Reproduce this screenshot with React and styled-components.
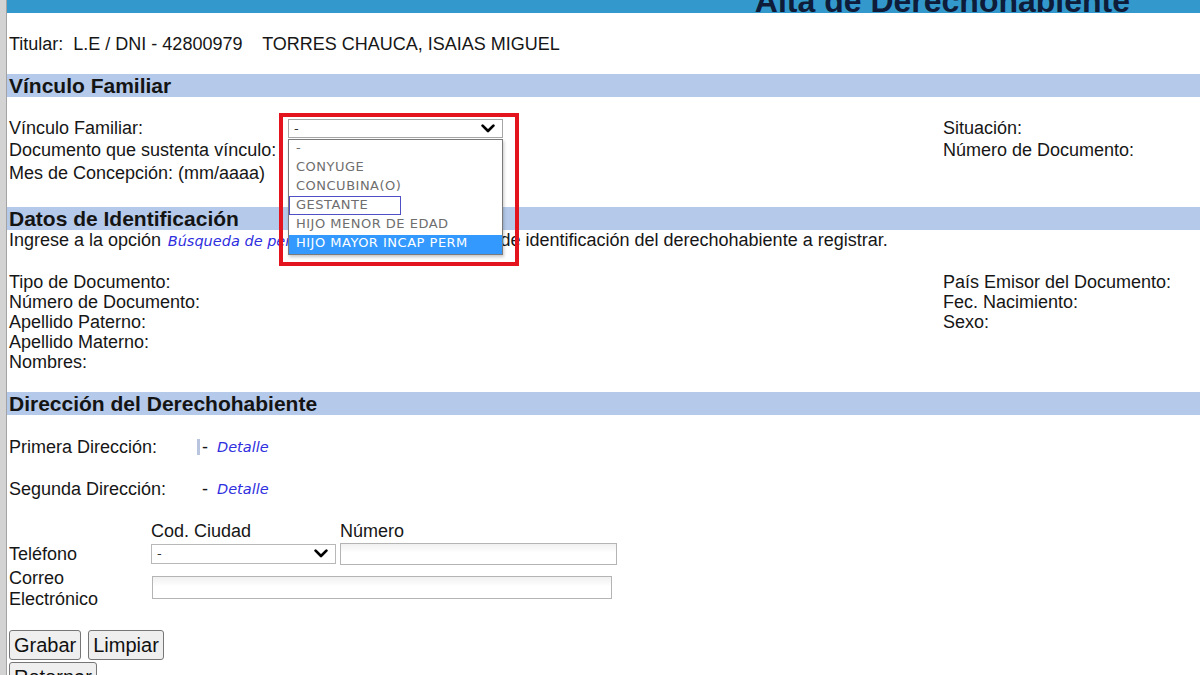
import React from "react";
import styled, { createGlobalStyle } from "styled-components";

const GlobalStyle = createGlobalStyle`
  html, body { margin: 0; padding: 0; background: #fff; }
  body {
    font-family: "Liberation Sans", Arial, sans-serif;
    font-size: 18px;
    color: #161616;
    overflow: hidden;
  }
  * { box-sizing: border-box; }
`;

const Frame = styled.div`
  display: flex;
  min-height: 100vh;
`;

const Rail = styled.div`
  flex: 0 0 7px;
  background: #d3d3d3;
  border-right: 1px solid #a3a3a3;
`;

const Page = styled.main`
  flex: 1;
  min-width: 0;
  display: flex;
  flex-direction: column;
`;

const Banner = styled.header`
  height: 13px;
  background: #3399cc;
  overflow: hidden;
  display: flex;
  justify-content: flex-end;
  padding-right: 70px;
`;

const BannerTitle = styled.h1`
  margin: -15px 0 0;
  font: 700 32px/32px "Liberation Sans", Arial, sans-serif;
  color: #0e1c3a;
  white-space: nowrap;
`;

const HolderLine = styled.div`
  margin-top: 21px;
  padding-left: 2px;
  line-height: 21px;
  white-space: pre;
`;

const SectionBar = styled.h2`
  margin: ${(p) => p.$top}px 0 0;
  height: 23px;
  background: #b5caea;
  padding-left: 2px;
  font: 700 21px/23px "Liberation Sans", Arial, sans-serif;
  color: #141414;
`;

const VinculoGrid = styled.div`
  margin-top: 20px;
  padding-left: 2px;
  display: grid;
  grid-template-columns: 279px 655px auto;
  grid-template-rows: 22px 22px 23px;
  align-items: center;
`;

const Label = styled.span`
  line-height: 20px;
  white-space: nowrap;
  grid-column: ${(p) => p.$col || "auto"};
  grid-row: ${(p) => p.$row || "auto"};
`;

const SelectWrap = styled.div`
  position: relative;
  grid-column: 2;
  grid-row: 1;
  width: ${(p) => p.$w}px;
  height: ${(p) => p.$h}px;
`;

const SelectBox = styled.div`
  display: flex;
  align-items: center;
  justify-content: space-between;
  height: 100%;
  border: 1px solid ${(p) => p.$border || "#a6a6a6"};
  background: #fff;
  padding: 0 7px 0 5px;
  font: 13px "DejaVu Sans", Verdana, sans-serif;
  color: #333;
`;

const Callout = styled.div`
  position: absolute;
  left: -9px;
  top: -6px;
  width: 240px;
  height: 153px;
  border: 4px solid #e3141e;
  pointer-events: none;
  z-index: 11;
`;

const OptionList = styled.ul`
  position: absolute;
  left: 0;
  top: 20px;
  width: 215px;
  margin: 0;
  padding: 0;
  list-style: none;
  border: 1px solid #7a7a7a;
  background: #fff;
  box-shadow: 1px 2px 3px rgba(0, 0, 0, 0.22);
  z-index: 10;
`;

const Option = styled.li`
  position: relative;
  height: 19px;
  line-height: 19px;
  padding-left: 7px;
  font: 13px "DejaVu Sans", Verdana, sans-serif;
  letter-spacing: 0.5px;
  white-space: nowrap;
  color: ${(p) => (p.$active ? "#fff" : "#6e6e6e")};
  background: ${(p) => (p.$active ? "#3399ff" : "transparent")};
`;

const FocusRing = styled.span`
  position: absolute;
  left: 0;
  top: -1px;
  width: 112px;
  height: 19px;
  border: 1.5px solid #5050c6;
`;

const IntroLine = styled.div`
  padding-left: 2px;
  line-height: 21px;
  white-space: nowrap;
  overflow: hidden;
`;

const LinkText = styled.a`
  font: italic 14.5px "DejaVu Sans", Verdana, sans-serif;
  color: #2f2fe0;
  text-decoration: none;
  cursor: pointer;
`;

const SearchLink = styled(LinkText)`
  margin: 0 11px 0 2px;
`;

const IdentBlock = styled.div`
  margin-top: 21px;
  padding-left: 2px;
  display: flex;
`;

const LabelStack = styled.div`
  display: flex;
  flex-direction: column;
  width: ${(p) => (p.$w ? `${p.$w}px` : "auto")};
  line-height: 20px;
`;

const AddressList = styled.div`
  margin-top: 22px;
  padding-left: 2px;
  display: flex;
  flex-direction: column;
  gap: 22px;
`;

const AddressRow = styled.div`
  display: grid;
  grid-template-columns: 188px auto;
  align-items: center;
  line-height: 20px;
`;

const AddressValue = styled.div`
  display: flex;
  align-items: center;
`;

const Caret = styled.span`
  width: 3px;
  height: 16px;
  margin-right: 2px;
  background: ${(p) => (p.$shown ? "#b9c5de" : "transparent")};
`;

const DetailLink = styled(LinkText)`
  margin-left: 9px;
`;

const PhoneGrid = styled.div`
  margin-top: 21px;
  padding-left: 2px;
  display: grid;
  grid-template-columns: 142px 189px 1fr;
  grid-template-rows: 21px 25px 43px;
  align-items: center;
`;

const TwoLineLabel = styled.span`
  grid-column: 1;
  grid-row: 3;
  line-height: 21px;
  padding-top: 2px;
`;

const TextField = styled.input`
  grid-column: ${(p) => p.$col};
  grid-row: ${(p) => p.$row};
  width: ${(p) => p.$w}px;
  height: ${(p) => p.$h}px;
  margin-left: ${(p) => p.$shift || 0}px;
  border: 1px solid #b4b4b4;
  background: linear-gradient(#f0f0f0, #ffffff 45%);
  padding: 0 4px;
  font: 16px "Liberation Sans", Arial, sans-serif;
  outline: none;
`;

const CitySelect = styled(SelectWrap)`
  grid-column: 2;
  grid-row: 2;
`;

const ButtonRow = styled.div`
  margin-top: ${(p) => p.$top}px;
  padding-left: 2px;
  display: flex;
  gap: 7px;
`;

const Button = styled.button`
  height: 30px;
  padding: 0 4px;
  font: 20px "Liberation Sans", Arial, sans-serif;
  color: #111;
  background: #efefef;
  border: 1px solid #767676;
  border-radius: 3px;
`;

const Chevron = () => (
  <svg width="14" height="9" viewBox="0 0 14 9" aria-hidden="true">
    <polyline
      points="1.6,1.6 7,7 12.4,1.6"
      fill="none"
      stroke="#000"
      strokeWidth="2.7"
      strokeLinecap="round"
      strokeLinejoin="round"
    />
  </svg>
);

const vinculoOptions = [
  "-",
  "CONYUGE",
  "CONCUBINA(O)",
  "GESTANTE",
  "HIJO MENOR DE EDAD",
  "HIJO MAYOR INCAP PERM",
];

export default function App() {
  return (
    <>
      <GlobalStyle />
      <Frame>
        <Rail />
        <Page>
          <Banner>
            <BannerTitle>Alta de Derechohabiente</BannerTitle>
          </Banner>

          <HolderLine>
            {"Titular:  L.E / DNI - 42800979    TORRES CHAUCA, ISAIAS MIGUEL"}
          </HolderLine>

          <SectionBar $top={19}>Vínculo Familiar</SectionBar>
          <VinculoGrid>
            <Label $col={1} $row={1}>Vínculo Familiar:</Label>
            <SelectWrap $w={215} $h={19}>
              <SelectBox>
                <span>-</span>
                <Chevron />
              </SelectBox>
              <OptionList>
                {vinculoOptions.map((opt) => (
                  <Option key={opt} $active={opt === "HIJO MAYOR INCAP PERM"}>
                    {opt === "GESTANTE" && <FocusRing />}
                    {opt}
                  </Option>
                ))}
              </OptionList>
              <Callout />
            </SelectWrap>
            <Label $col={3} $row={1}>Situación:</Label>
            <Label $col={1} $row={2}>Documento que sustenta vínculo:</Label>
            <Label $col={3} $row={2}>Número de Documento:</Label>
            <Label $col={1} $row={3}>Mes de Concepción: (mm/aaaa)</Label>
          </VinculoGrid>

          <SectionBar $top={23}>Datos de Identificación</SectionBar>
          <IntroLine>
            Ingrese a la opción<SearchLink> Búsqueda de personas</SearchLink>
            para obtener datos de identificación del derechohabiente a
            registrar.
          </IntroLine>
          <IdentBlock>
            <LabelStack $w={934}>
              <span>Tipo de Documento:</span>
              <span>Número de Documento:</span>
              <span>Apellido Paterno:</span>
              <span>Apellido Materno:</span>
              <span>Nombres:</span>
            </LabelStack>
            <LabelStack>
              <span>País Emisor del Documento:</span>
              <span>Fec. Nacimiento:</span>
              <span>Sexo:</span>
            </LabelStack>
          </IdentBlock>

          <SectionBar $top={20}>Dirección del Derechohabiente</SectionBar>
          <AddressList>
            <AddressRow>
              <span>Primera Dirección:</span>
              <AddressValue>
                <Caret $shown />
                <span>-</span>
                <DetailLink>Detalle</DetailLink>
              </AddressValue>
            </AddressRow>
            <AddressRow>
              <span>Segunda Dirección:</span>
              <AddressValue>
                <Caret />
                <span>-</span>
                <DetailLink>Detalle</DetailLink>
              </AddressValue>
            </AddressRow>
          </AddressList>

          <PhoneGrid>
            <Label $col={2} $row={1}>Cod. Ciudad</Label>
            <Label $col={3} $row={1}>Número</Label>
            <Label $col={1} $row={2}>Teléfono</Label>
            <CitySelect $w={185} $h={20}>
              <SelectBox $border="#b8b8b8">
                <span>-</span>
                <Chevron />
              </SelectBox>
            </CitySelect>
            <TextField $col={3} $row={2} $w={277} $h={22} />
            <TwoLineLabel>
              Correo
              <br />
              Electrónico
            </TwoLineLabel>
            <TextField $col="2 / 4" $row={3} $w={460} $h={23} $shift={1} />
          </PhoneGrid>

          <ButtonRow $top={21}>
            <Button>Grabar</Button>
            <Button>Limpiar</Button>
          </ButtonRow>
          <ButtonRow $top={2}>
            <Button>Retornar</Button>
          </ButtonRow>
        </Page>
      </Frame>
    </>
  );
}
